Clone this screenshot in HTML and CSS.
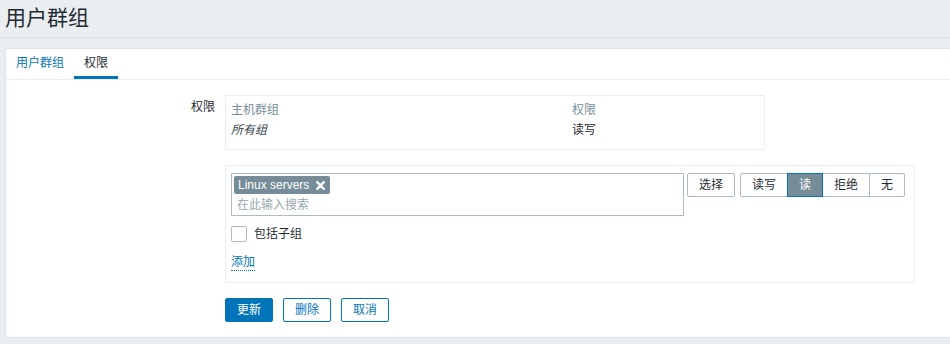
FILE: index.html
```html
<!DOCTYPE html>
<html lang="zh-CN">
<head>
  <meta charset="UTF-8" />
  <title>用户群组</title>
  <link rel="stylesheet" href="styles.css">
</head>
<body>
  <header class="page-header">
    <h1>用户群组</h1>
  </header>

  <div class="container">
    <ul class="tabs">
      <li><a href="#">用户群组</a></li>
      <li class="active"><a href="#">权限</a></li>
    </ul>

    <div class="form">
      <div class="form-row">
        <label class="form-label">权限</label>
        <div class="form-field">
          <div class="box perm-box">
            <table class="perm-table">
              <tr>
                <th class="col-group">主机群组</th>
                <th>权限</th>
              </tr>
              <tr>
                <td class="col-group"><em>所有组</em></td>
                <td>读写</td>
              </tr>
            </table>
          </div>
        </div>
      </div>

      <div class="form-row">
        <div class="form-label"></div>
        <div class="form-field">
          <div class="box add-box">
            <div class="select-row">
              <div class="multiselect">
                <span class="tag">Linux servers
                  <svg class="tag-x" width="9" height="9" viewBox="0 0 9 9">
                    <path d="M1.2 1.2 L7.8 7.8 M7.8 1.2 L1.2 7.8" stroke="#ffffff" stroke-width="2.4" stroke-linecap="round"/>
                  </svg>
                </span>
                <div class="placeholder">在此输入搜索</div>
              </div>
              <button class="btn-alt">选择</button>
              <div class="radio-group">
                <span class="radio">读写</span>
                <span class="radio checked">读</span>
                <span class="radio">拒绝</span>
                <span class="radio">无</span>
              </div>
            </div>
            <label class="check-row">
              <span class="checkbox"></span>
              包括子组
            </label>
            <a href="#" class="link-action">添加</a>
          </div>
        </div>
      </div>

      <div class="form-row">
        <div class="form-label"></div>
        <div class="form-field actions">
          <button class="btn-primary">更新</button>
          <button class="btn-alt blue">删除</button>
          <button class="btn-alt blue">取消</button>
        </div>
      </div>
    </div>
  </div>
</body>
</html>
```

FILE: styles.css
```css
body {
  font-family: "Liberation Sans", Arial, "Noto Sans CJK SC", sans-serif;
  font-size: 12px;
  color: #1f2c33;
  background: #ebeef0;
  margin: 0;
  padding: 0;
  overflow: hidden;
}

.page-header {
  height: 37px;
  border-bottom: 1px solid #dde3e6;
  margin-bottom: 10px;
}

.page-header h1 {
  margin: 0;
  padding: 5px 0 0 5px;
  font-size: 21px;
  font-weight: normal;
  line-height: 26px;
}

.container {
  background: #ffffff;
  border: 1px solid #dfe4e7;
  margin: 0 -10px 0 5px;
  padding-bottom: 15px;
}

.tabs {
  list-style: none;
  margin: 0;
  padding: 0;
  display: flex;
  height: 30px;
  border-bottom: 1px solid #ebeef0;
}

.tabs li a {
  display: block;
  padding: 0 10px;
  line-height: 28px;
  color: #0275b8;
  text-decoration: none;
  border-bottom: 3px solid transparent;
}

.tabs li.active a {
  color: #1f2c33;
  border-bottom-color: #0275b8;
  height: 27px;
}

.form {
  padding-top: 15px;
}

.form-row {
  display: flex;
  margin-bottom: 15px;
}

.form-row:last-child {
  margin-bottom: 0;
}

.form-label {
  width: 209px;
  padding-right: 10px;
  text-align: right;
  padding-top: 5px;
  line-height: 14px;
  flex-shrink: 0;
}

.box {
  border: 1px solid #ebeef0;
}

.perm-box {
  width: 528px;
  padding: 4px 5px 9px;
}

.perm-table {
  border-collapse: collapse;
  width: 100%;
}

.perm-table th,
.perm-table td {
  text-align: left;
  padding: 0;
  height: 20px;
  line-height: 20px;
  font-weight: normal;
}

.perm-table th {
  color: #768d99;
}

.perm-table em {
  font-weight: normal;
  color: #39474e;
}

.perm-table .col-group {
  width: 341px;
}

.add-box {
  width: 678px;
  padding: 7px 5px 11px;
}

.select-row {
  display: flex;
  align-items: flex-start;
}

.multiselect {
  width: 447px;
  height: 37px;
  border: 1px solid #acbbc2;
  padding: 2px;
}

.tag {
  display: inline-flex;
  align-items: center;
  background: #768d99;
  color: #ffffff;
  border-radius: 2px;
  padding: 0 4px;
  height: 18px;
  line-height: 18px;
  font-size: 12px;
}

.tag-x {
  margin-left: 7px;
  margin-right: 1px;
}

.placeholder {
  color: #9aa9b0;
  padding: 4px 0 0 3px;
  line-height: 14px;
}

button {
  font-family: inherit;
  font-size: 12px;
  height: 24px;
  padding: 0 11px;
  border-radius: 2px;
  cursor: pointer;
  line-height: 22px;
}

.btn-alt {
  background: #ffffff;
  border: 1px solid #acbbc2;
  color: #1f2c33;
  margin-left: 3px;
}

.btn-alt.blue {
  border-color: #0275b8;
  color: #0275b8;
  margin-left: 10px;
}

.btn-primary {
  background: #0275b8;
  border: 1px solid #0275b8;
  color: #ffffff;
}

.radio-group {
  display: flex;
  margin-left: 5px;
}

.radio {
  height: 22px;
  line-height: 22px;
  padding: 0 11px;
  border: 1px solid #acbbc2;
  margin-left: -1px;
  background: #ffffff;
}

.radio:first-child {
  margin-left: 0;
  border-radius: 2px 0 0 2px;
}

.radio:last-child {
  border-radius: 0 2px 2px 0;
}

.radio.checked {
  background: #768d99;
  border-color: #0275b8;
  color: #ffffff;
  position: relative;
}

.check-row {
  display: flex;
  align-items: center;
  margin-top: 10px;
  line-height: 16px;
}

.checkbox {
  width: 14px;
  height: 14px;
  border: 1px solid #acbbc2;
  border-radius: 2px;
  margin-right: 7px;
}

.link-action {
  display: inline-block;
  margin-top: 13px;
  color: #0275b8;
  text-decoration: none;
  border-bottom: 1px dotted #0275b8;
  line-height: 15px;
}

.actions {
  display: flex;
}
```
